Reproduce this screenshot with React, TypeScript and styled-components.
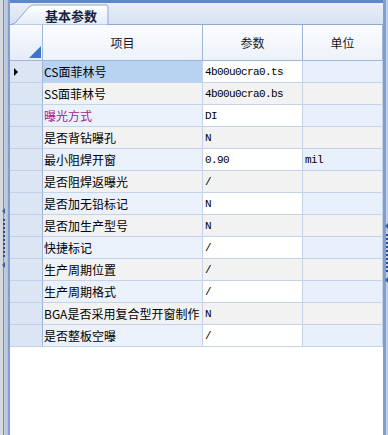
import React from "react";
import styled, { createGlobalStyle } from "styled-components";

const GlobalStyle = createGlobalStyle`
  html, body {
    margin: 0;
    padding: 0;
    background: #ffffff;
  }
  body {
    font-family: "Noto Sans CJK SC", "DejaVu Sans", sans-serif;
    font-size: 12px;
  }
`;

type Row = { name: string; value: string; unit?: string; pink?: boolean };

const rows: Row[] = [
  { name: "CS面菲林号", value: "4b00u0cra0.ts" },
  { name: "SS面菲林号", value: "4b00u0cra0.bs" },
  { name: "曝光方式", value: "DI", pink: true },
  { name: "是否背钻曝孔", value: "N" },
  { name: "最小阻焊开窗", value: "0.90", unit: "mil" },
  { name: "是否阻焊返曝光", value: "/" },
  { name: "是否加无铅标记", value: "N" },
  { name: "是否加生产型号", value: "N" },
  { name: "快捷标记", value: "/" },
  { name: "生产周期位置", value: "/" },
  { name: "生产周期格式", value: "/" },
  { name: "BGA是否采用复合型开窗制作", value: "N" },
  { name: "是否整板空曝", value: "/" },
];

function App() {
  return (
    <>
      <GlobalStyle />
      <Screen>
        <Splitter side="left">
          <Grip side="left" offset={208}>
            <Arrow />
            <Dots />
            <Arrow />
          </Grip>
        </Splitter>
        <Panel>
          <TabStrip>
            <Tab>
              <TabShape viewBox="0 0 98 21" preserveAspectRatio="none">
                <defs>
                  <linearGradient id="tabfill" x1="0" y1="0" x2="0" y2="1">
                    <stop offset="0" stopColor="#ffffff" />
                    <stop offset="1" stopColor="#e3ebf7" />
                  </linearGradient>
                </defs>
                <path
                  d="M0 21 L0 20 Q2 20 4 18 L17 3 Q19 1 22 1 L94 1 Q96 1 96 3 L96 21 Z"
                  fill="url(#tabfill)"
                  stroke="#8ea8cf"
                  strokeWidth="1"
                />
              </TabShape>
              <TabLabel>基本参数</TabLabel>
            </Tab>
          </TabStrip>
          <Grid>
            <CornerCell>
              <svg width="12" height="12" viewBox="0 0 12 12">
                <path d="M12 0 L12 12 L0 12 Z" fill="#3f75c6" />
              </svg>
            </CornerCell>
            <HeadCell>项目</HeadCell>
            <HeadCell>参数</HeadCell>
            <HeadCell>单位</HeadCell>
            {rows.map((r, i) => (
              <React.Fragment key={r.name}>
                <RowHead>{i === 0 && <Pointer />}</RowHead>
                <NameCell even={i % 2 === 1} selected={i === 0} pink={r.pink}>
                  {r.name}
                </NameCell>
                <ValueCell even={i % 2 === 1}>{r.value}</ValueCell>
                <UnitCell even={i % 2 === 1}>{r.unit ?? ""}</UnitCell>
              </React.Fragment>
            ))}
          </Grid>
        </Panel>
        <Splitter side="right">
          <Grip side="right" offset={223}>
            <Arrow />
            <Dots />
            <Arrow />
          </Grip>
        </Splitter>
      </Screen>
    </>
  );
}

const Screen = styled.div`
  width: 388px;
  height: 435px;
  display: flex;
  overflow: hidden;
  background: #ffffff;
`;

const Splitter = styled.div<{ side: "left" | "right" }>`
  width: ${({ side }) => (side === "left" ? "8px" : "2px")};
  flex-shrink: 0;
  display: flex;
  flex-direction: column;
  background: ${({ side }) =>
    side === "left"
      ? "linear-gradient(90deg, #d5d9e0 0, #d5d9e0 3px, #7d8ca3 3px, #7d8ca3 4px, #c6cfdc 4px, #b4c2d6 8px)"
      : "#c3cfdf"};
`;

const Grip = styled.div<{ side: "left" | "right"; offset: number }>`
  margin-top: ${({ offset }) => offset}px;
  display: flex;
  flex-direction: column;
  align-items: ${({ side }) => (side === "left" ? "flex-start" : "flex-end")};
  gap: 5px;
  padding-left: ${({ side }) => (side === "left" ? "2px" : "0")};
`;

const Arrow = styled.div`
  width: 0;
  height: 0;
  border-top: 3px solid transparent;
  border-bottom: 3px solid transparent;
  border-right: 3px solid #3e5f8f;
`;

const Dots = styled.div`
  width: 2px;
  height: 38px;
  margin-left: 1px;
  background: repeating-linear-gradient(
    180deg,
    #2f4f84 0,
    #2f4f84 2px,
    transparent 2px,
    transparent 4px
  );
`;

const Panel = styled.div`
  flex: 1;
  display: flex;
  flex-direction: column;
  border-left: 2px solid #7f9fd0;
  border-right: 3px solid #7f9fd0;
  background: #ffffff;
  min-width: 0;
`;

const TabStrip = styled.div`
  height: 21px;
  border-top: 3px solid #5c87cc;
  background: linear-gradient(180deg, #e9eff8 0%, #d6e1f0 100%);
  border-bottom: 1px solid #8ea8cf;
  display: flex;
  align-items: flex-end;
  padding-left: 2px;
`;

const Tab = styled.div`
  position: relative;
  width: 98px;
  height: 21px;
  margin-bottom: -1px;
  display: flex;
  align-items: center;
  justify-content: flex-end;
`;

const TabShape = styled.svg`
  position: absolute;
  inset: 0;
  width: 98px;
  height: 21px;
`;

const TabLabel = styled.span`
  position: relative;
  font-family: "Noto Sans CJK SC", sans-serif;
  font-weight: bold;
  font-size: 13px;
  color: #15233c;
  padding-right: 13px;
  padding-top: 1px;
`;

const Grid = styled.div`
  display: grid;
  grid-template-columns: 33px 160px 100px 1fr;
  grid-template-rows: 36px;
  grid-auto-rows: 22px;
`;

const Cell = styled.div`
  border-right: 1px solid #c4d3e8;
  border-bottom: 1px solid #c4d3e8;
  display: flex;
  align-items: center;
  box-sizing: border-box;
  white-space: nowrap;
  overflow: hidden;
  color: #000000;
`;

const CornerCell = styled(Cell)`
  background: linear-gradient(180deg, #f9fbfe 0%, #e4ecf8 100%);
  border-right-color: #9fb6d8;
  border-bottom-color: #9fb6d8;
  align-items: flex-end;
  justify-content: flex-end;
  padding: 0 1px 2px 0;
`;

const HeadCell = styled(Cell)`
  justify-content: center;
  background: linear-gradient(180deg, #fbfcfe 0%, #edf2fa 100%);
  border-right-color: #9fb6d8;
  border-bottom-color: #9fb6d8;
  font-size: 12px;
  color: #1a1a1a;
`;

const RowHead = styled(Cell)`
  background: #dbe5f3;
  border-right-color: #9fb6d8;
  border-bottom-color: #c0d0e6;
  padding-left: 4px;
`;

const Pointer = styled.div`
  width: 0;
  height: 0;
  border-top: 4px solid transparent;
  border-bottom: 4px solid transparent;
  border-left: 4px solid #000000;
`;

const NameCell = styled(Cell)<{ even: boolean; selected: boolean; pink?: boolean }>`
  padding-left: 1px;
  font-size: 12px;
  background: ${({ selected, even }) =>
    selected ? "#b8d3f1" : even ? "#f2f2f2" : "#eaf1fb"};
  color: ${({ pink }) => (pink ? "#a3238f" : "#000000")};
`;

const ValueCell = styled(Cell)<{ even: boolean }>`
  padding-left: 2px;
  font-family: "Liberation Mono", "DejaVu Sans Mono", monospace;
  font-size: 11px;
  letter-spacing: -0.6px;
  background: ${({ even }) => (even ? "#f2f2f2" : "#ffffff")};
`;

const UnitCell = styled(Cell)<{ even: boolean }>`
  padding-left: 2px;
  font-family: "Liberation Mono", "DejaVu Sans Mono", monospace;
  font-size: 11px;
  letter-spacing: -0.6px;
  background: ${({ even }) => (even ? "#f2f2f2" : "#e8f0fb")};
`;

export default App;
